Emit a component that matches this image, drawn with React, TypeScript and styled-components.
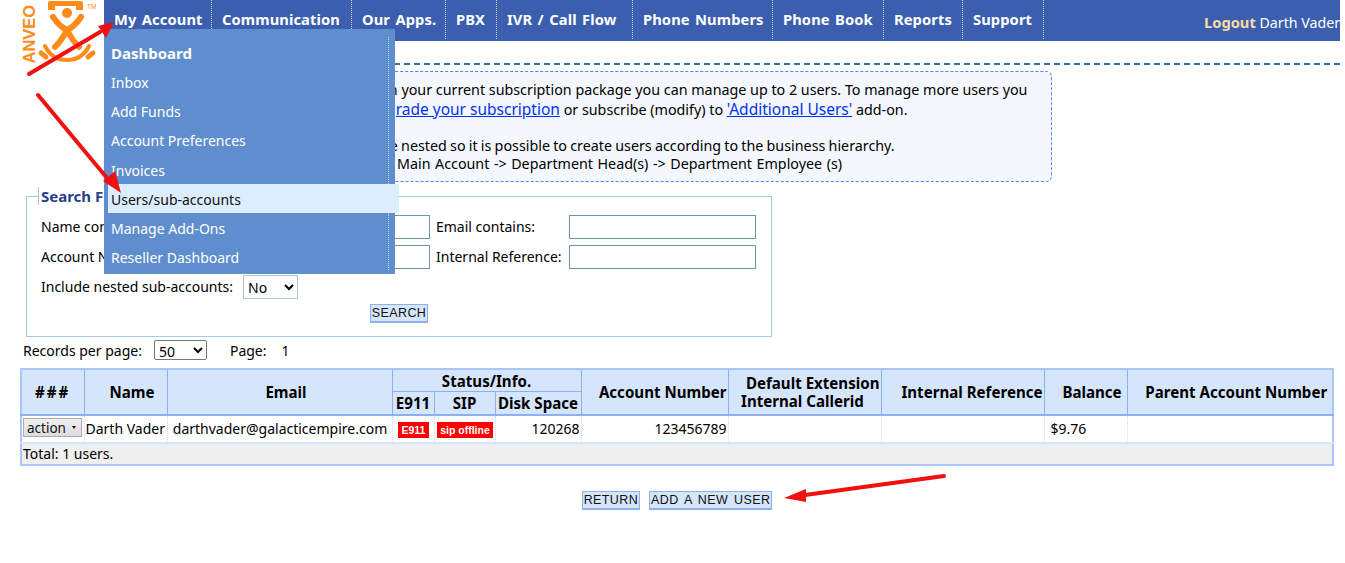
import React from 'react'
import styled, { createGlobalStyle } from 'styled-components'

const font = '"Noto Sans", Tahoma, sans-serif'

const GlobalStyle = createGlobalStyle`
  html, body {
    margin: 0;
    padding: 0;
    background: #fff;
  }
  body {
    font-family: ${font};
    font-size: 14px;
    color: #000;
    overflow: hidden;
  }
`

const Page = styled.div`
  position: relative;
  width: 1340px;
  height: 563px;
`

const Header = styled.header`
  display: flex;
  height: 41px;
`

const LogoBox = styled.div`
  width: 104px;
  flex: none;
  padding-left: 22px;
  box-sizing: border-box;
`

const NavBar = styled.nav`
  flex: 1;
  display: flex;
  justify-content: space-between;
  background: #3b5fae;
`

const NavList = styled.ul`
  display: flex;
  margin: 0;
  padding: 0;
  list-style: none;
`

const NavItem = styled.li<{ $width: number }>`
  width: ${p => p.$width}px;
  box-sizing: border-box;
  height: 39px;
  padding-left: 10px;
  border-right: 1px dotted #c8d4ec;
  color: #fff;
  font-weight: 700;
  font-size: 14.7px;
  letter-spacing: 0.1px;
  word-spacing: 1.5px;
  line-height: 39px;
  white-space: nowrap;
`

const UserBox = styled.div`
  padding-top: 12px;
  color: #fff;
  white-space: nowrap;
  overflow: hidden;
  width: 136px;
  font-size: 14.2px;
`

const Logout = styled.span`
  color: #fcd9a8;
  font-weight: 700;
  font-size: 14.7px;
`

const InfoRow = styled.div`
  margin-left: 104px;
  margin-top: 22px;
  border-top: 2px dashed #3a6ea5;
  padding-top: 6px;
`

const InfoBox = styled.div`
  box-sizing: border-box;
  width: 948px;
  height: 111px;
  background: #f4f8fe;
  border: 1px dashed #4a8af0;
  border-radius: 6px;
  padding: 9px 24px 0 0;
  font-size: 14.3px;
  line-height: 18.5px;
`

const InfoText = styled.p`
  margin: 0 0 0 14px;
  & + & {
    margin-top: 18px;
    line-height: 18px;
  }
`

const InfoLine = styled.span<{ $indent: number; $spread?: number }>`
  display: block;
  margin-left: ${p => p.$indent}px;
  word-spacing: ${p => p.$spread ?? 0}px;
  white-space: nowrap;
`

const InfoLink = styled.a`
  color: #0033ee;
  text-decoration: underline;
  font-size: 15.5px;
`

const SearchSet = styled.fieldset`
  box-sizing: border-box;
  margin: 5px 0 0 26px;
  width: 746px;
  height: 150px;
  padding: 0 15px 0 14px;
  border: 1px solid #a9c6ef;
  min-inline-size: 0;
`

const SearchLegend = styled.legend`
  margin-left: -3px;
  padding: 0 3px 0 2px;
  border-left: 1px solid #a9c6ef;
  color: #27408b;
  font-weight: 700;
  font-size: 15px;
  line-height: 18px;
`

const FieldGrid = styled.div`
  display: grid;
  grid-template-columns: 203px 186px 139px 187px;
  row-gap: 6px;
  align-items: center;
  margin-top: 10px;
`

const FieldLabel = styled.label<{ $pad?: number }>`
  padding-left: ${p => p.$pad ?? 0}px;
  white-space: nowrap;
  line-height: 24px;
`

const TextInput = styled.input`
  box-sizing: border-box;
  width: 100%;
  height: 24px;
  border: 1px solid #6f93ad;
  background: #fff;
  padding: 0 3px;
`

const NestedRow = styled.div`
  display: flex;
  align-items: center;
  gap: 10px;
  margin-top: 6px;
  height: 24px;
`

const NativeSelect = styled.select<{ $w: number; $c: string }>`
  box-sizing: border-box;
  width: ${p => p.$w}px;
  height: ${p => (p.$w > 54 ? 24 : 20)}px;
  background: #fff;
  border: 1px solid ${p => p.$c};
  border-radius: ${p => (p.$w > 54 ? 0 : 2)}px;
  font-family: ${font};
  font-size: 14px;
  color: #000;
`

const SearchRow = styled.div`
  display: flex;
  justify-content: center;
  margin-top: 5px;
  padding-left: 1px;
`

const FlatButton = styled.button`
  box-sizing: border-box;
  height: 19px;
  padding: 0 1px;
  background: #d5e5fb;
  border: 1px solid #8fb0ee;
  border-bottom-width: 2px;
  font-family: "Liberation Sans", Arial, sans-serif;
  font-size: 12.5px;
  letter-spacing: 0.4px;
  word-spacing: 2px;
  line-height: 15px;
  color: #111;
`

const PagerRow = styled.div`
  display: flex;
  align-items: center;
  height: 20px;
  margin: 3px 0 0 23px;
`

const PagerText = styled.span<{ $right: number }>`
  margin-right: ${p => p.$right}px;
  white-space: nowrap;
`

const Table = styled.table`
  margin: 8px 0 0 20px;
  width: 1314px;
  table-layout: fixed;
  border-collapse: collapse;
  border: 2px solid #a9c6f5;
`

const HeadCell = styled.th<{ $align?: string; $left?: number }>`
  background: #d5e5fb;
  border-right: 1px solid #8fb0ee;
  border-bottom: 2px solid #8fb0ee;
  padding: 0 ${p => (p.$align === 'right' ? 1 : 0)}px 0 ${p => p.$left ?? 0}px;
  text-align: ${p => p.$align ?? 'center'};
  font-size: 15.1px;
  font-weight: 700;
  line-height: 18px;
  white-space: nowrap;
`

const HashCell = styled(HeadCell)`
  letter-spacing: 2px;
`

const GroupCell = styled(HeadCell)`
  height: 21px;
  border-bottom: 1px solid #8fb0ee;
`

const SubCell = styled(HeadCell)`
  height: 22px;
`

const BodyCell = styled.td<{ $align?: string; $left?: number }>`
  height: 26px;
  padding: 0 1px 0 ${p => p.$left ?? 2}px;
  border-right: 1px dotted #cfdcec;
  border-bottom: 2px solid #d5e5fb;
  text-align: ${p => p.$align ?? 'left'};
  line-height: 20px;
  white-space: nowrap;
  overflow: hidden;
`

const TotalCell = styled.td`
  height: 20px;
  padding: 0 1px;
  background: #efefef;
  line-height: 18px;
`

const ActionButton = styled.button`
  box-sizing: border-box;
  display: inline-flex;
  align-items: center;
  justify-content: space-between;
  vertical-align: middle;
  width: 59px;
  height: 19px;
  margin: 0 0 3px;
  padding: 0 5px 0 3px;
  background: linear-gradient(#f0f0f0, #dcdcdc);
  border: 1px solid #aaa;
  font-family: ${font};
  font-size: 13.5px;
  color: #111;
`

const Caret = styled.span`
  width: 0;
  height: 0;
  border-left: 2.5px solid transparent;
  border-right: 2.5px solid transparent;
  border-top: 3px solid #111;
`

const Badge = styled.span<{ $pad: number }>`
  display: inline-block;
  vertical-align: middle;
  padding: 0 ${p => p.$pad}px;
  background: #ff0000;
  color: #fff;
  font-family: "Liberation Sans", Arial, sans-serif;
  font-weight: 700;
  font-size: 10.5px;
  line-height: 16px;
`

const Actions = styled.div`
  display: flex;
  justify-content: center;
  gap: 9px;
  margin: 25px 0 0 14px;
`

const Dropdown = styled.ul`
  position: absolute;
  left: 104px;
  top: 29px;
  width: 291px;
  height: 245px;
  box-sizing: border-box;
  margin: 0;
  padding: 9.5px 0 0;
  list-style: none;
  background: #5f8ecf;
  &::after {
    content: '';
    position: absolute;
    top: 8px;
    bottom: 4px;
    right: 6px;
    border-right: 1px dotted #c8d8f0;
  }
`

const DropItem = styled.li<{ $active?: boolean; $bold?: boolean }>`
  position: relative;
  z-index: 1;
  box-sizing: border-box;
  height: 29.25px;
  line-height: ${p => (p.$active ? 31 : 29)}px;
  padding-left: ${p => (p.$active ? 3 : 7)}px;
  margin: ${p => (p.$active ? '-1px 0 1px 4px' : '0')};
  width: ${p => (p.$active ? 291 : 287)}px;
  color: ${p => (p.$active ? '#111' : '#fff')};
  background: ${p => (p.$active ? '#dcedfd' : 'transparent')};
  font-weight: ${p => (p.$bold ? 700 : 400)};
  font-size: ${p => (p.$bold ? 15 : 14)}px;
  white-space: nowrap;
`

const ArrowLayer = styled.svg`
  position: absolute;
  left: 0;
  top: 0;
  z-index: 5;
  pointer-events: none;
`

function Logo() {
  return (
    <svg width="78" height="66" viewBox="0 0 78 66">
      <text
        transform="translate(13 63.5) rotate(-90)"
        fontFamily='"Liberation Sans", sans-serif'
        fontWeight="700"
        fontSize="16.5"
        fill="#ff8c1a"
      >
        ANVEO
      </text>
      <path d="M26 3 Q26 1 29 1 H58 Q61 1 61 3 V10 H54 V6 H33 V10 H26 Z" fill="#ff8c1a" />
      <circle cx="45" cy="13" r="5" fill="#ff8c1a" />
      <g fill="none" stroke="#ff8c1a" strokeLinecap="round">
        <path d="M31 17 Q38 27 45 30 Q52 27 59 17" strokeWidth="6" />
        <path d="M45 30 Q40 40 33 47 M45 30 Q50 40 57 47" strokeWidth="6" />
        <path d="M23 46 Q30 60 45 60 Q60 60 67 46" strokeWidth="4" />
        <path d="M24 57 L19 53 M66 57 L71 53" strokeWidth="5" />
      </g>
      <text x="65" y="9" fontFamily='"Liberation Sans", sans-serif' fontSize="6.5" fill="#ff8c1a">
        TM
      </text>
    </svg>
  )
}

const navItems = [
  ['My Account', 108],
  ['Communication', 140],
  ['Our Apps.', 94],
  ['PBX', 51],
  ['IVR / Call Flow', 136],
  ['Phone Numbers', 140],
  ['Phone Book', 111],
  ['Reports', 79],
  ['Support', 81],
] as const

const menuItems = ['Inbox', 'Add Funds', 'Account Preferences', 'Invoices']

export default function App() {
  return (
    <Page>
      <GlobalStyle />
      <Header>
        <LogoBox>
          <Logo />
        </LogoBox>
        <NavBar>
          <NavList>
            {navItems.map(([label, width]) => (
              <NavItem key={label} $width={width}>
                {label}
              </NavItem>
            ))}
          </NavList>
          <UserBox>
            <Logout>Logout</Logout> Darth Vader
          </UserBox>
        </NavBar>
      </Header>

      <main>
        <InfoRow>
          <InfoBox>
            <InfoText>
              <InfoLine $indent={265}>
                In your current subscription package you can manage up to 2 users. To manage more users you
              </InfoLine>
              <InfoLine $indent={248}>
                <InfoLink href="#">upgrade your subscription</InfoLink> or subscribe (modify) to{' '}
                <InfoLink href="#">'Additional Users'</InfoLink> add-on.
              </InfoLine>
            </InfoText>
            <InfoText>
              <InfoLine $indent={262} $spread={-0.5}>
                be nested so it is possible to create users according to the business hierarchy.
              </InfoLine>
              <InfoLine $indent={278} $spread={0.8}>
                Main Account -&gt; Department Head(s) -&gt; Department Employee (s)
              </InfoLine>
            </InfoText>
          </InfoBox>
        </InfoRow>

        <SearchSet>
          <SearchLegend>Search Filter</SearchLegend>
          <FieldGrid>
            <FieldLabel>Name contains:</FieldLabel>
            <TextInput />
            <FieldLabel $pad={6}>Email contains:</FieldLabel>
            <TextInput />
            <FieldLabel>Account Number:</FieldLabel>
            <TextInput />
            <FieldLabel $pad={6}>Internal Reference:</FieldLabel>
            <TextInput />
          </FieldGrid>
          <NestedRow>
            <FieldLabel>Include nested sub-accounts:</FieldLabel>
            <NativeSelect $w={55} $c="#a8cbbb" defaultValue="No">
              <option>No</option>
              <option>Yes</option>
            </NativeSelect>
          </NestedRow>
          <SearchRow>
            <FlatButton>SEARCH</FlatButton>
          </SearchRow>
        </SearchSet>

        <PagerRow>
          <PagerText $right={12}>Records per page:</PagerText>
          <PagerText $right={23}>
            <NativeSelect $w={53} $c="#777" defaultValue="50">
              <option>50</option>
              <option>100</option>
            </NativeSelect>
          </PagerText>
          <PagerText $right={15}>Page:</PagerText>
          <PagerText $right={0}>1</PagerText>
        </PagerRow>

        <Table>
          <colgroup>
            <col style={{ width: 63 }} />
            <col style={{ width: 83 }} />
            <col style={{ width: 225 }} />
            <col style={{ width: 42 }} />
            <col style={{ width: 61 }} />
            <col style={{ width: 86 }} />
            <col style={{ width: 147 }} />
            <col style={{ width: 153 }} />
            <col style={{ width: 163 }} />
            <col style={{ width: 83 }} />
            <col />
          </colgroup>
          <thead>
            <tr>
              <HashCell rowSpan={2}>###</HashCell>
              <HeadCell rowSpan={2} $left={13}>Name</HeadCell>
              <HeadCell rowSpan={2} $left={13}>Email</HeadCell>
              <GroupCell colSpan={3}>Status/Info.</GroupCell>
              <HeadCell rowSpan={2} $align="right">Account Number</HeadCell>
              <HeadCell rowSpan={2} $align="right">
                Default Extension
                <br />
                Internal Callerid&nbsp;&nbsp;&nbsp;&nbsp;
              </HeadCell>
              <HeadCell rowSpan={2} $align="right">Internal Reference</HeadCell>
              <HeadCell rowSpan={2} $left={13}>Balance</HeadCell>
              <HeadCell rowSpan={2} $left={13}>Parent Account Number</HeadCell>
            </tr>
            <tr>
              <SubCell>E911</SubCell>
              <SubCell>SIP</SubCell>
              <SubCell>Disk Space</SubCell>
            </tr>
          </thead>
          <tbody>
            <tr>
              <BodyCell $left={1}>
                <ActionButton>
                  action <Caret />
                </ActionButton>
              </BodyCell>
              <BodyCell $left={1}>Darth Vader</BodyCell>
              <BodyCell $align="center">darthvader@galacticempire.com</BodyCell>
              <BodyCell $align="center"><Badge $pad={4}>E911</Badge></BodyCell>
              <BodyCell $align="center"><Badge $pad={3}>sip offline</Badge></BodyCell>
              <BodyCell $align="right">120268</BodyCell>
              <BodyCell $align="right">123456789</BodyCell>
              <BodyCell />
              <BodyCell />
              <BodyCell $left={6}>$9.76</BodyCell>
              <BodyCell />
            </tr>
            <tr>
              <TotalCell colSpan={11}>Total: 1 users.</TotalCell>
            </tr>
          </tbody>
        </Table>

        <Actions>
          <FlatButton>RETURN</FlatButton>
          <FlatButton>ADD A NEW USER</FlatButton>
        </Actions>
      </main>

      <Dropdown>
        <DropItem $bold>Dashboard</DropItem>
        {menuItems.map(item => (
          <DropItem key={item}>{item}</DropItem>
        ))}
        <DropItem $active>Users/sub-accounts</DropItem>
        <DropItem>Manage Add-Ons</DropItem>
        <DropItem>Reseller Dashboard</DropItem>
      </Dropdown>

      <ArrowLayer width="1345" height="563" viewBox="0 0 1345 563">
        <g fill="none" stroke="#f01010" strokeWidth="4" strokeLinecap="round">
          <path d="M29 74 L100 32" />
          <path d="M38 95 L112 184" />
          <path d="M944 476 L805 495" />
        </g>
        <g fill="#f01010">
          <path d="M114 22 L98 26 L106 38 Z" />
          <path d="M121 193 L103 181 L115 171 Z" />
          <path d="M784 498 L806 489 L806 502 Z" />
        </g>
      </ArrowLayer>
    </Page>
  )
}
